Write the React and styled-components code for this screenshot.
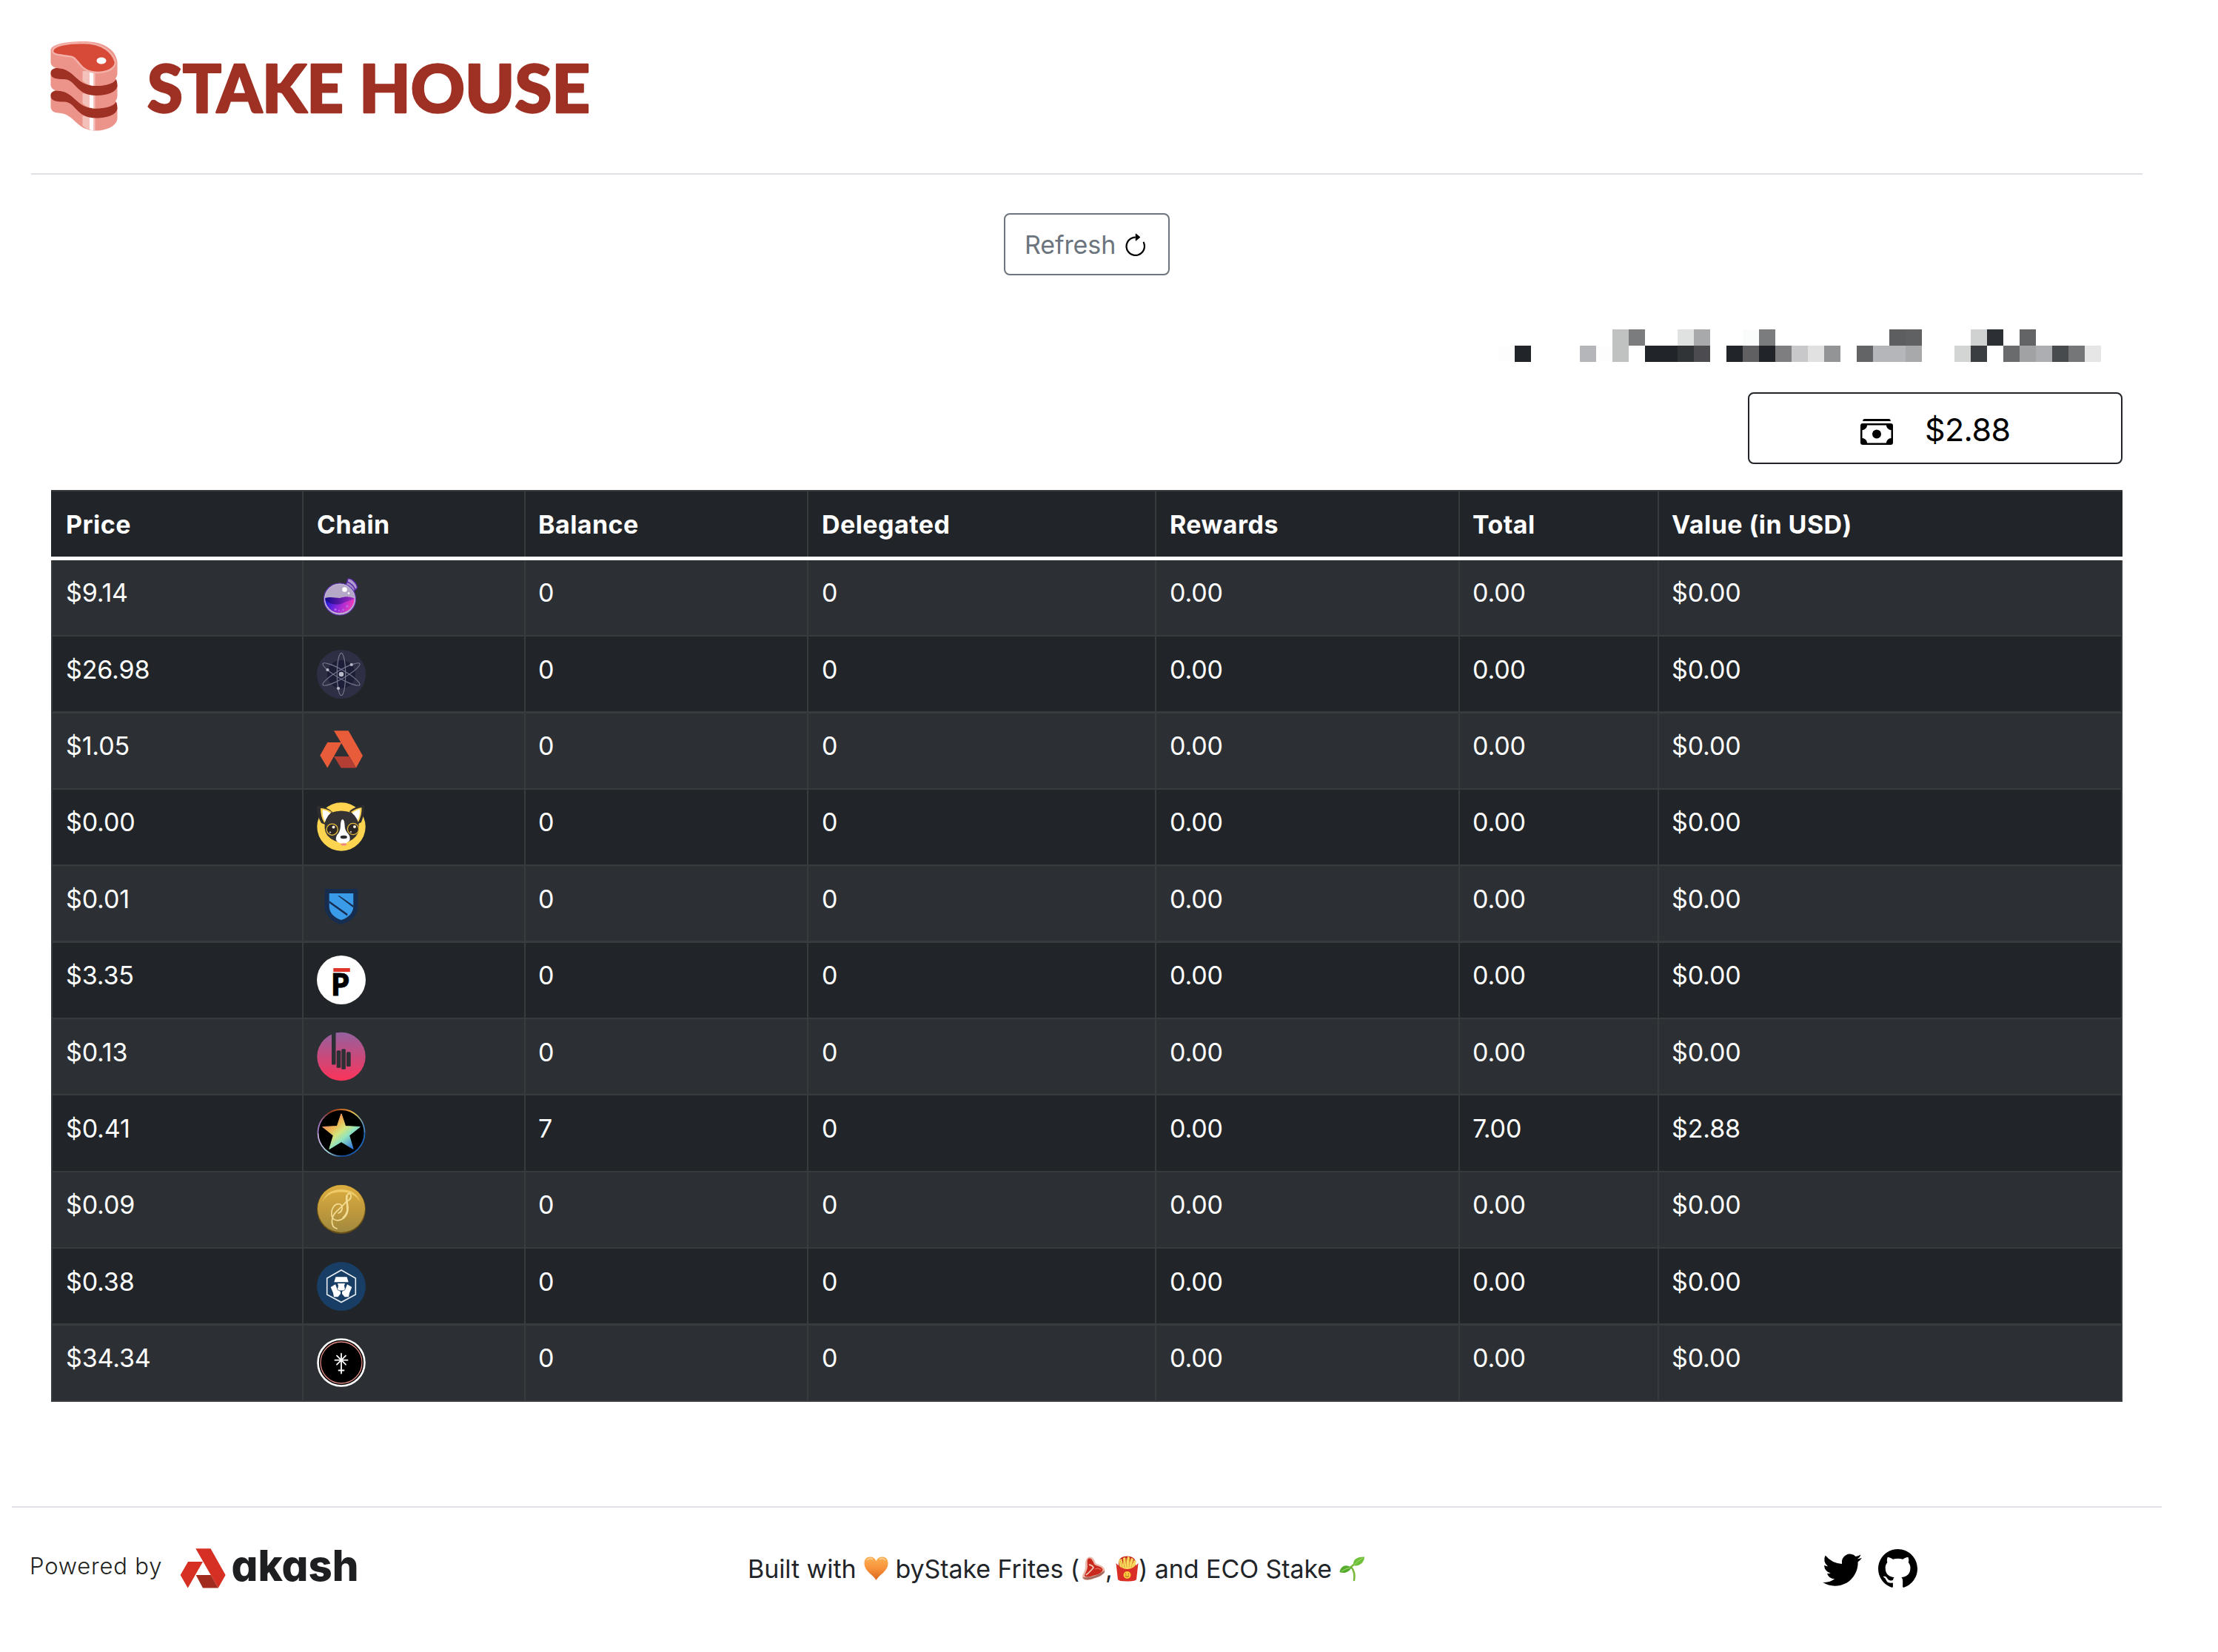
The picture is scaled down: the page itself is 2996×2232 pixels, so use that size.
import React from "react";
import styled, { createGlobalStyle } from "styled-components";
import { BsArrowClockwise, BsTwitter, BsGithub } from "react-icons/bs";

const GlobalStyle = createGlobalStyle`
  *, *::before, *::after { box-sizing: border-box; }
  body {
    margin: 0;
    background: #fff;
    color: #212529;
    font-family: Inter, "Liberation Sans", sans-serif;
    font-size: 34px;
    line-height: 53px;
  }
  svg { display: block; flex: none; overflow: visible; }
`;

const Page = styled.div`
  width: 2936px;
  display: flex;
  flex-direction: column;
`;

const Header = styled.header`
  height: 236px;
  margin: 0 42px;
  padding: 50px 0 0 26px;
  border-bottom: 2px solid #dee2e6;
`;

const Main = styled.main`
  display: flex;
  flex-direction: column;
  padding: 52px 69px 0;
`;

const RefreshButton = styled.button`
  align-self: center;
  display: flex;
  align-items: center;
  width: 224px;
  height: 84px;
  padding: 0 0 0 26px;
  border: 2px solid #6c757d;
  border-radius: 8px;
  background: transparent;
  color: #6c757d;
  font: inherit;
  letter-spacing: -0.1px;

  svg {
    margin: 6px 0 0 9px;
    color: #000;
  }
`;

const Address = styled.div`
  align-self: flex-end;
  display: grid;
  grid-template-columns: repeat(37, 22px);
  grid-auto-rows: 22px;
  margin: 73px 29px 0 0;
`;

const Block = styled.span`
  background: ${(p) => p.$tone};
`;

const TotalCard = styled.div`
  align-self: flex-end;
  display: flex;
  align-items: center;
  width: 506px;
  height: 97px;
  margin: 41px 0 35px;
  padding: 3px 0 0 150px;
  border: 2px solid #212529;
  border-radius: 8px;
  color: #000;
  font-size: 43px;
  letter-spacing: -0.6px;

  svg { margin: 6px 43px 0 0; }
`;

const Table = styled.div`
  display: flex;
  flex-direction: column;
  border: 2px solid #373b3e;
  border-bottom: 0;
  color: #fff;
`;

const Row = styled.div`
  display: grid;
  grid-template-columns: 339px 300px 382px 470px 410px 269px 1fr;
  height: ${(p) => p.$height}px;
  background: ${(p) => (p.$striped ? "#2c3034" : "#212529")};
`;

const HeadRow = styled(Row)`
  height: 93px;
  margin: 0 -2px;
  padding: 0 2px;
  border-bottom: 5px solid #fff;
  font-weight: 700;
`;

const Cell = styled.div`
  padding: ${(p) => (p.$head || p.$drop ? 18 : 17)}px 0 0 18px;
  border-right: 2px solid #373b3e;
  border-bottom: ${(p) => (p.$head ? 0 : p.$line || 2)}px solid #373b3e;
  letter-spacing: ${(p) => (p.$head ? 0.45 : -0.15)}px;
  white-space: nowrap;

  &:nth-child(3), &:nth-child(6), &:nth-child(7) { padding-left: 17px; }
  &:last-child { border-right: 0; }
`;

const Footer = styled.footer`
  display: grid;
  grid-template-columns: 994px 1452px 1fr;
  align-items: center;
  margin: 141px 16px 0;
  padding: 54px 0 80px;
  border-top: 2px solid #dee2e6;
`;

const Powered = styled.div`
  padding-left: 24px;
`;

const Credits = styled.div`
  display: flex;
  align-items: center;
  height: 53px;
  letter-spacing: -0.08px;
`;

const Phrase = styled.span`
  width: ${(p) => p.$width}px;
  white-space: pre;
`;

const Social = styled.div`
  display: flex;
  gap: 22px;
  color: #000;
`;

const STEAK_BODY =
  "M0 12V28C0 33 5 36 10 36C33 37 34 60 61 60C78 60 90 52 90 43V28C88 10 70 0 44 0C20 0 0 4 0 12Z";
const STEAK_BAND =
  "M0 43C0 38 4 36 9 36C33 37 34 60 61 60C75 60 85 57 88.500 51C89.500 54 90 57 90 60C89 68 78 73 61 73C34 73 34 51 18 51C8 51 0 50 0 43Z";

const SteakLayer = ({ y }) => (
  <g transform={`translate(0 ${y})`}>
    <path d={STEAK_BODY} fill="#ec938a" />
    <path d="M43 40H60V60C53 60 47 57 43 53Z" fill="#f4c0ba" />
    <path d="M52.500 40H57.500V60L52.500 58.500Z" fill="#fff" />
  </g>
);

const WORDMARK = {
  y: 102,
  fill: "#9e3024",
  stroke: "#9e3024",
  strokeWidth: 2.5,
  strokeLinejoin: "round",
  fontFamily: "Lato, sans-serif",
  fontWeight: 900,
  fontSize: 90,
  lengthAdjust: "spacingAndGlyphs",
};

const StakeHouseLogo = () => (
  <svg width="740" height="140" viewBox="0 0 740 140">
    <g transform="translate(0.500 6)">
      <SteakLayer y={60.5} />
      <path d={STEAK_BAND} fill="#9e3024" transform="translate(0 30.500)" />
      <SteakLayer y={30.5} />
      <path d={STEAK_BAND} fill="#9e3024" />
      <SteakLayer y={0} />
      <path
        d="M2.500 13C3 5 22 2 44 2C72 2 84 16 87.500 28C87 37 76 42 63 42C44 41 41 32 36 27C30 18 24 21 14 18.500C7 18 2.500 16 2.500 13Z"
        fill="#d84a38"
        stroke="#f2b0a9"
        strokeWidth="2.500"
      />
      <ellipse cx="68.500" cy="26" rx="6.500" ry="4.500" fill="#fff" />
    </g>
    <text {...WORDMARK} x="131" textLength="265">STAKE</text>
    <text {...WORDMARK} x="417" textLength="312">HOUSE</text>
  </svg>
);

const CashIcon = () => (
  <svg width="44" height="35" viewBox="0 0 44 35">
    <path d="M5 0H39Q40.500 0 41 3H3Q3.500 0 5 0Z" />
    <rect x="1.250" y="7.250" width="41.500" height="26.500" rx="2" fill="none" stroke="#000" strokeWidth="2.500" />
    <path d="M1 7H9A7 7 0 0 1 1 15ZM43 7H35A7 7 0 0 0 43 15ZM1 34H9A7 7 0 0 0 1 26ZM43 34H35A7 7 0 0 1 43 26Z" />
    <circle cx="22" cy="20.500" r="6" />
  </svg>
);

const Token = ({ children }) => (
  <svg width="66" height="66" viewBox="0 0 66 66">{children}</svg>
);

const Osmosis = () => (
  <Token>
    <defs>
      <linearGradient id="osmoLiquid" x1="0" x2="1" y1="0" y2="0.200">
        <stop offset="0" stopColor="#0a1bd8" />
        <stop offset="0.500" stopColor="#8b25dc" />
        <stop offset="1" stopColor="#f03cbc" />
      </linearGradient>
      <linearGradient id="osmoWave" x1="0" x2="1">
        <stop offset="0" stopColor="#12088a" />
        <stop offset="1" stopColor="#a92bc4" />
      </linearGradient>
    </defs>
    <path d="M41 12L44 12L52 20L50 26L46 28L38 19Z" fill="#a08bc4" stroke="#5c2aa8" strokeWidth="1.200" />
    <path d="M42 8C47 7 54 14 54.500 20L52 23C50 18 46 14 41 12Z" fill="#b09bd0" stroke="#5c2aa8" strokeWidth="1.400" />
    <circle cx="31" cy="35.500" r="21.500" fill="#b5a7c6" stroke="#6437b0" strokeWidth="1.200" />
    <path d="M11 34H51A20 20 0 0 1 11 34Z" fill="url(#osmoLiquid)" />
    <path d="M11 34C20 32 25 34 31 34C39 31 46 32 51 34.500C45 38 40 38 35 41C26 45 16 41 11 37Z" fill="url(#osmoWave)" />
    <circle cx="31" cy="35.500" r="20.300" fill="none" stroke="#c5b6df" strokeWidth="1" />
    <circle cx="37.500" cy="22.500" r="3.300" fill="#fff" />
    <circle cx="43" cy="27.500" r="1.300" fill="#fff" />
    <g fill="#b46be8">
      <circle cx="25" cy="49.500" r="1.500" /><circle cx="30" cy="51" r="1" /><circle cx="35.500" cy="50" r="1.300" />
      <circle cx="41" cy="45" r="1.600" /><circle cx="33" cy="53" r="0.800" />
    </g>
  </Token>
);

const Cosmos = () => (
  <Token>
    <circle cx="33" cy="33" r="33" fill="#2e2e45" />
    <circle cx="33" cy="33" r="19" fill="#1b1e36" />
    <g fill="none" stroke="#74778f" strokeWidth="1.200">
      <ellipse cx="33" cy="33" rx="5.700" ry="28.700" />
      <ellipse cx="33" cy="33" rx="5.700" ry="28.700" transform="rotate(60 33 33)" />
      <ellipse cx="33" cy="33" rx="5.700" ry="28.700" transform="rotate(-60 33 33)" />
    </g>
    <g fill="#b9bac8">
      <circle cx="33" cy="33" r="3.300" /><circle cx="46.700" cy="20" r="2.100" />
      <circle cx="14.500" cy="27" r="2.100" /><circle cx="29" cy="52" r="2.100" />
    </g>
  </Token>
);

const Akash = () => (
  <Token>
    <path d="M23 6.300H42.700L62 40L53 56.500Z" fill="#e85c3a" />
    <path d="M14.300 22H33.700L14.300 56.500L4.300 39.700Z" fill="#e85c3a" />
    <path d="M23 41H43.500L53 56.500H32.700Z" fill="#b33e34" />
  </Token>
);

const Huahua = () => (
  <Token>
    <circle cx="33" cy="33" r="32.700" fill="#fcd450" />
    <path d="M0 5Q11 4 21 13L11 30L6 28Q0 18 0 5ZM64 4Q54 4 44 12L56 29L60 27Q65 14 64 4Z" fill="#2f2c2d" />
    <path d="M5 8Q12 8 20 13L10 28Q5 19 5 8ZM60.500 7Q53 8 46 13L56 27Q61 17 60.500 7Z" fill="#fcd450" />
    <path d="M8 10Q14 11 19 15L11 26Q7 18 8 10ZM58 9Q52 11 47 15L55 25Q59 17 58 9Z" fill="#fff" />
    <path d="M19 14Q33 9 47 14Q57 22 57 35Q56 47 43 53Q34 56 24 52Q11 46 10.500 34Q10 22 19 14Z" fill="#353233" />
    <path d="M34.700 23Q37 23 37.500 30Q37.500 38 42 42Q46 47 44 52Q40 56 35.500 55.500Q29 56 26 51Q25 46 29 42Q32 38 32 30Q32.500 23 34.700 23Z" fill="#fff" />
    <ellipse cx="36.300" cy="47" rx="4.600" ry="2.200" fill="#2f2c2d" />
    <ellipse cx="36.300" cy="56.800" rx="4" ry="1.600" fill="#ee8781" />
    <g fill="#2b2523" stroke="#e5bd3e" strokeWidth="1.300">
      <circle cx="20.700" cy="36.700" r="7.600" /><circle cx="49" cy="36" r="7.600" />
    </g>
    <g fill="#f6f1dc">
      <circle cx="22.500" cy="33.500" r="2" /><circle cx="51" cy="33" r="2" />
      <circle cx="18" cy="40.500" r="1" /><circle cx="46" cy="40" r="1" />
    </g>
  </Token>
);

const Sentinel = () => (
  <Token>
    <path d="M10.700 14H55.300V39C55 50 45 59 33 62C21 59 11 50 10.700 39Z" fill="#162d50" />
    <path d="M16.700 20H49.300V38C49 46 43 53 33 56C23 53 17 46 16.700 38Z" fill="#3a9be9" />
    <path d="M28 23L31 23.500L49.500 36.500V39.500ZM16.700 30L41.500 47.800L41 50.500L16.700 33Z" fill="#162d50" />
  </Token>
);

const Persistence = () => (
  <Token>
    <circle cx="33" cy="33" r="33" fill="#fff" />
    <rect x="22.300" y="17" width="22.500" height="5" fill="#e0352b" />
    <text x="18.700" y="54.300" fontFamily="'Noto Sans', sans-serif" fontWeight="700" fontSize="41.500" stroke="#000" strokeWidth="0.800">P</text>
  </Token>
);

const Bitsong = () => (
  <Token>
    <defs>
      <linearGradient id="songDisc" x1="0" x2="0" y1="0" y2="1">
        <stop offset="0" stopColor="#95619f" /><stop offset="1" stopColor="#fc3359" />
      </linearGradient>
    </defs>
    <circle cx="33" cy="33.500" r="32.700" fill="url(#songDisc)" />
    <g fill="#2c3034">
      <path d="M20 0H25.500V43Q25.500 44.500 24 44.500H21.500Q20 44.500 20 43Z" />
      <rect x="26.700" y="25.300" width="5.600" height="23.500" rx="1.500" />
      <rect x="33.300" y="23.300" width="5.600" height="27.500" rx="1.500" />
      <rect x="40" y="27.300" width="5.700" height="19.800" rx="1.500" />
    </g>
  </Token>
);

const Stargaze = () => (
  <Token>
    <defs>
      <linearGradient id="starFill" x1="0.150" x2="0.850" y1="0.150" y2="0.950">
        <stop offset="0" stopColor="#e98672" /><stop offset="0.250" stopColor="#eeb653" />
        <stop offset="0.450" stopColor="#d6e57c" /><stop offset="0.650" stopColor="#8fe3c0" />
        <stop offset="1" stopColor="#3273dc" />
      </linearGradient>
      <linearGradient id="ringWarm" x1="0" x2="1">
        <stop offset="0" stopColor="#a77ed0" /><stop offset="0.250" stopColor="#8c3519" />
        <stop offset="0.600" stopColor="#d9802d" /><stop offset="0.800" stopColor="#e6c75a" />
        <stop offset="1" stopColor="#3f86cc" />
      </linearGradient>
      <linearGradient id="ringCool" x1="0" x2="1">
        <stop offset="0" stopColor="#c9a9e0" /><stop offset="0.200" stopColor="#a9d9de" />
        <stop offset="0.500" stopColor="#144a96" /><stop offset="1" stopColor="#1d6bc0" />
      </linearGradient>
    </defs>
    <circle cx="33" cy="33.500" r="32" fill="#000" />
    <path d="M1.500 33.500A31.500 31.500 0 0 1 64.500 33.500" fill="none" stroke="url(#ringWarm)" strokeWidth="1.800" />
    <path d="M1.500 33.500A31.500 31.500 0 0 0 64.500 33.500" fill="none" stroke="url(#ringCool)" strokeWidth="1.800" />
    <path d="M33 8L38.500 24.500L58 25.500L43.500 37L49 55.200L33 45.500L17 55.200L22.500 37L8 25.500L27.500 24.500Z" fill="url(#starFill)" stroke="url(#starFill)" strokeWidth="1.200" strokeLinejoin="round" />
  </Token>
);

const Gold = () => (
  <Token>
    <defs>
      <linearGradient id="goldDisc" x1="0" x2="0" y1="0" y2="1">
        <stop offset="0" stopColor="#dcae40" /><stop offset="0.500" stopColor="#c39b3c" /><stop offset="1" stopColor="#a1893f" />
      </linearGradient>
    </defs>
    <circle cx="33" cy="33" r="33" fill="#695017" />
    <circle cx="33" cy="32" r="32" fill="url(#goldDisc)" />
    <path d="M7 24Q13 6 33 6T59 24Q52 10 33 9.500T7 24Z" fill="#efca69" />
    <path d="M40 22C45 21 48 15 45 12C41 10 39 17 40.500 23C42 31 43 39 36 45C29 50 21 48 20 41C19 31 25 24 31 26C36 28 35 36 29 38M40 22C34 31 21 37 20.500 47C20 53 22 58 27 59" fill="none" stroke="#f3dc93" strokeWidth="1.700" strokeLinecap="round" />
    <path d="M40.500 14C39 22 43 29 41 36Q39 42 35 45" fill="none" stroke="#f3dc93" strokeWidth="2.600" />
  </Token>
);

const CryptoOrg = () => (
  <Token>
    <circle cx="33" cy="33" r="33" fill="#183e65" />
    <g transform="translate(0 -1)">
      <path d="M33 12L52.300 23V45L33 55.500L13.700 45V23Z" fill="none" stroke="#e9eef4" strokeWidth="1.600" />
      <g fill="#fff">
        <path d="M25.500 21.300H40.500L42.700 28.300H23.300Z" />
        <path d="M28 30H38L37 33L38 38L36 39.500H30L28 38L29 33Z" />
        <path d="M18.700 35L25 31.300L28 39L32 41V44L28.500 48.300H23L22 43Z" />
        <path d="M47.300 35L41 31.300L38 39L34 41V44L37.500 48.300H43L44 43Z" />
      </g>
    </g>
  </Token>
);

const Juno = () => (
  <Token>
    <circle cx="33" cy="33" r="31.500" fill="#000" stroke="#fff" strokeWidth="2.600" />
    <circle cx="33" cy="33" r="28" fill="none" stroke="#e18a82" strokeWidth="1.300" />
    <path d="M33 21V47.500M24.500 29.700H41.500M27 23.700L39 35.700M39 23.700L27 35.700M29.500 43.500H36.500" stroke="#fff" strokeWidth="1.800" strokeLinecap="round" />
  </Token>
);

const AkashWord = styled.text`
  fill: #1e1f21;
  font-size: 58px;
  font-weight: 800;
  font-feature-settings: "cv11";
`;

const PoweredWord = styled.text`
  fill: #1e1f21;
  font-size: 31px;
  font-weight: 350;
`;

const AkashLogo = () => (
  <svg width="450" height="56" viewBox="0 0 450 56">
    <PoweredWord x="0" y="36" textLength="178.500">Powered by</PoweredWord>
    <path d="M224.300 1.200H244.500L264.600 37L254.800 54.500Z" fill="#d63024" />
    <path d="M214 19H234L213.700 54.500L203.700 37Z" fill="#d63024" />
    <path d="M224.700 37H244.800L254.800 54.500H234Z" fill="#a22b20" />
    <AkashWord x="272.500" y="45" textLength="172" lengthAdjust="spacingAndGlyphs">akash</AkashWord>
  </svg>
);

const Heart = () => (
  <svg width="33" height="33" viewBox="0 0 33 33">
    <defs>
      <linearGradient id="heartFill" x1="0" x2="0" y1="0" y2="1">
        <stop offset="0" stopColor="#fdb154" /><stop offset="0.500" stopColor="#f8923a" /><stop offset="1" stopColor="#d9661c" />
      </linearGradient>
    </defs>
    <path d="M16.500 32C12 24 0.500 20 0.500 9C0.500 3 4 0.500 8.500 0.500C12.500 0.500 15 2.500 16.500 6C18 2.500 20.500 0.500 24.500 0.500C29 0.500 32.500 3 32.500 9C32.500 20 21 24 16.500 32Z" fill="url(#heartFill)" />
    <path d="M4 5Q8 1 12 4M21 4Q25 1 29 5" fill="none" stroke="#fdd29c" strokeWidth="1.400" />
  </svg>
);

const Steak = () => (
  <svg width="32" height="32" viewBox="0 0 32 32">
    <path d="M9 1C14-1 17 4 19 9C22 11 31 12 31.500 19C31 24 25 27 18 29C11 33 3 33 1 29C0 25 5 20 5 14C5 8 5 3 9 1Z" fill="#eab7a8" />
    <path d="M1.500 28Q15 30 31 19V21Q28 26 18 29Q4 34 1.500 28Z" fill="#a56a5e" />
    <path d="M9 3C13 1 15 6 17.500 11C21 13 28 14 28.500 18C27 23 20 25 15 26C10 28 5 28 4 26C5 22 8 18 8 13C8 8 7 5 9 3Z" fill="#c9281d" />
    <path d="M10 11Q15 12 16 15Q13 19 6 25" fill="none" stroke="#f0c5b6" strokeWidth="1.800" />
    <path d="M18 17Q23 15 26 18" fill="none" stroke="#e46c5a" strokeWidth="1.200" />
  </svg>
);

const Fries = () => (
  <svg width="31" height="35" viewBox="0 0 31 35">
    <path d="M4 10Q4 1 15.500 0.500Q27 1 27 10V15H4Z" fill="#c9261d" />
    <path d="M4 6L8 4L10 12L10 3L13 2L14 12L16 1L19 2L18 12L21 3L24 4L22 12L25 6L28 7L25 19H6Z" fill="#fbd95e" />
    <path d="M10 4L12 16M14 3L15 16M19 3L18 16M24 5L21 16M6 6L9 16" stroke="#dca437" strokeWidth="0.900" />
    <path d="M0.500 10Q8 18 15.500 18T30.500 10L28 32Q27 34.500 15.500 34.500T3 32Z" fill="#da2f27" />
    <circle cx="15.500" cy="26" r="5" fill="#fbc93f" />
    <path d="M13 27Q15.500 30 18 27M13.500 24V25M17.500 24V25" fill="none" stroke="#9a5314" />
  </svg>
);

const Seedling = () => (
  <svg width="35" height="33" viewBox="0 0 35 33">
    <path d="M20 32Q22 21 16 14Q18 12 21 10" fill="none" stroke="#79b83a" strokeWidth="2.600" strokeLinecap="round" />
    <path d="M34 0.500C24 0 18 4 19 12C27 14 34 8 34 0.500Z" fill="#6fbf3b" />
    <path d="M16.500 15C10 10 2 12 0.500 21C8 24 14 20 16.500 15Z" fill="#55ab2f" />
    <path d="M32 2Q26 5 20 11M15 15Q9 16 3 20" fill="none" stroke="#a8dc6a" strokeWidth="1" />
  </svg>
);

const RAW_TONES = [
  ". . . . . . . c0c2c1 7b7c7e . . e0e2e1 a8a9ab . . fafcfb 7b7c7e . . . . . . . 5d5e60 606163 . . . d0d2d1 2c3034 . 636466 . . . .",
  "fdfdfd 212529 . . . b5b6b9 fdfdfd c0c2c1 . 212529 212529 303437 4c4c50 . 212529 606062 212529 7e7e80 c8c8cb e1e1e1 939496 . 636466 b5b6b9 b5b6b9 a8a9ab . . d3d5d4 3a3e41 . 6a6b6d a1a2a4 adaeb1 474b4d 757678 e6e6e6",
];
const TONES = RAW_TONES.join(" ")
  .split(" ")
  .map((tone) => (tone === "." ? "transparent" : `#${tone}`));

const HEADINGS = ["Price", "Chain", "Balance", "Delegated", "Rewards", "Total", "Value (in USD)"];

const CHAINS = [
  { price: "$9.14", Icon: Osmosis, height: 103 },
  { price: "$26.98", Icon: Cosmos, height: 104, line: 3, drop: true, iconDrop: true },
  { price: "$1.05", Icon: Akash, height: 103 },
  { price: "$0.00", Icon: Huahua, height: 103 },
  { price: "$0.01", Icon: Sentinel, height: 104, line: 3, drop: true },
  { price: "$3.35", Icon: Persistence, height: 103 },
  { price: "$0.13", Icon: Bitsong, height: 103, drop: true },
  { price: "$0.41", Icon: Stargaze, height: 104, drop: true, balance: "7", total: "7.00", value: "$2.88" },
  { price: "$0.09", Icon: Gold, height: 103 },
  { price: "$0.38", Icon: CryptoOrg, height: 104, line: 3, drop: true, iconDrop: true },
  { price: "$34.34", Icon: Juno, height: 103 },
];

export default function App() {
  return (
    <>
      <GlobalStyle />
      <Page>
        <Header>
          <StakeHouseLogo />
        </Header>
        <Main>
          <RefreshButton>
            Refresh
            <BsArrowClockwise size={35.5} />
          </RefreshButton>
          <Address>
            {TONES.map((tone, i) => (
              <Block key={i} $tone={tone} />
            ))}
          </Address>
          <TotalCard>
            <CashIcon />
            $2.88
          </TotalCard>
          <Table>
            <HeadRow>
              {HEADINGS.map((heading) => (
                <Cell key={heading} $head>{heading}</Cell>
              ))}
            </HeadRow>
            {CHAINS.map(({ price, Icon, height, line, drop, iconDrop, balance = "0", total = "0.00", value = "$0.00" }, i) => (
              <Row key={price} $height={height} $striped={i % 2 === 0}>
                <Cell $line={line} $drop={drop}>{price}</Cell>
                <Cell $line={line} $drop={iconDrop}><Icon /></Cell>
                <Cell $line={line} $drop={drop}>{balance}</Cell>
                <Cell $line={line} $drop={drop}>0</Cell>
                <Cell $line={line} $drop={drop}>0.00</Cell>
                <Cell $line={line} $drop={drop}>{total}</Cell>
                <Cell $line={line} $drop={drop}>{value}</Cell>
              </Row>
            ))}
          </Table>
        </Main>
        <Footer>
          <Powered>
            <AkashLogo />
          </Powered>
          <Credits>
            <Phrase $width={157}>Built with</Phrase>
            <Heart />
            <Phrase $width={261}>{" "}byStake Frites (</Phrase>
            <Steak />
            <Phrase $width={14}>,</Phrase>
            <Fries />
            <Phrase $width={271}>) and ECO Stake</Phrase>
            <Seedling />
          </Credits>
          <Social>
            <BsTwitter size={53} />
            <BsGithub size={53} />
          </Social>
        </Footer>
      </Page>
    </>
  );
}
